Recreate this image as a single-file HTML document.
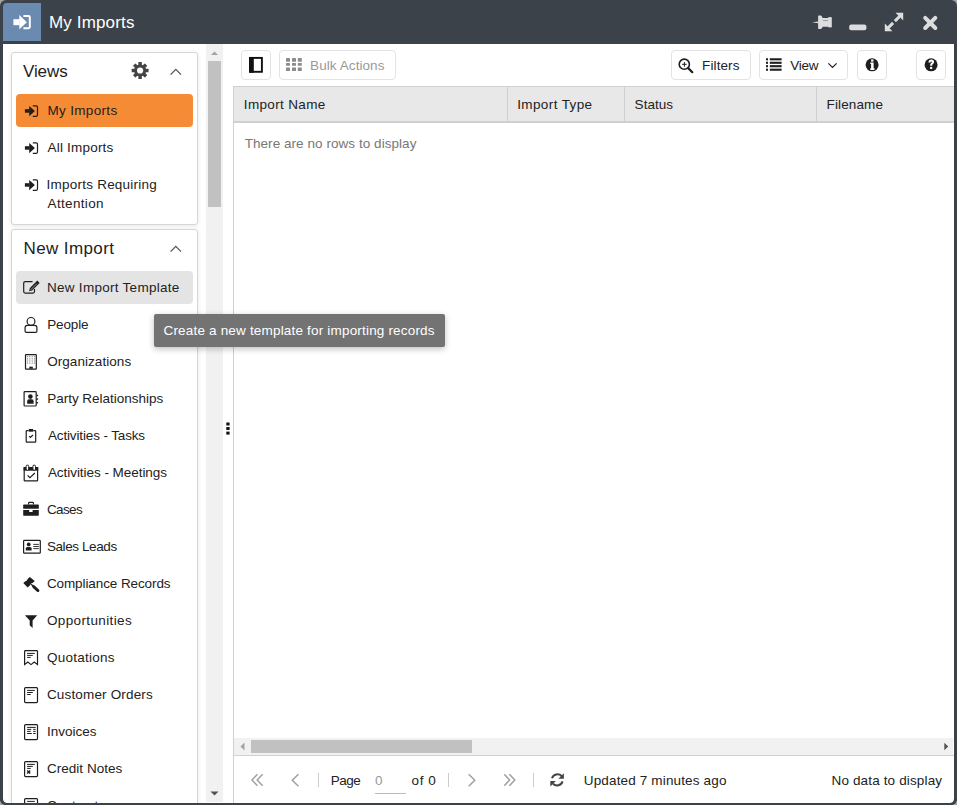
<!DOCTYPE html>
<html><head><meta charset="utf-8"><style>
html,body{margin:0;padding:0;width:957px;height:805px;overflow:hidden;background:#a3a5a7;}
*{box-sizing:border-box;}
.t{position:absolute;white-space:nowrap;font-family:"Liberation Sans",sans-serif;}
.abs{position:absolute;}
#frame{position:absolute;left:0;top:0;width:957px;height:805px;background:#3c4249;border-radius:6px;}
#content{position:absolute;left:3px;top:44px;width:951px;height:759px;background:#fff;border-radius:0 0 4px 4px;overflow:hidden;}
#appicon{position:absolute;left:3px;top:3px;width:38px;height:38px;background:#6a8aaf;border-radius:4px 0 0 0;}
.panel{position:absolute;background:#fff;border:1px solid #d6d6d6;border-radius:3px;box-shadow:0 1px 4px rgba(0,0,0,0.10);}
.btn{position:absolute;top:50px;height:30px;border:1px solid #e3e3e3;border-radius:4px;background:#fff;}
</style></head><body>
<div id="frame"></div>
<div id="appicon"></div>
<div class="t" style="left:49.00px;top:11.61px;font-size:17px;line-height:21px;color:#fff;letter-spacing:0.15px;">My Imports</div>
<div id="content"></div>
<div class="panel" style="left:11px;top:52px;width:187px;height:173px;"></div>
<div class="panel" style="left:11px;top:229px;width:187px;height:600px;"></div>
<div class="abs" style="left:16px;top:94px;width:177px;height:33px;background:#f58b35;border-radius:4px;"></div>
<div class="abs" style="left:16px;top:271px;width:177px;height:33px;background:#e4e4e4;border-radius:4px;"></div>
<div class="abs" style="left:206px;top:44px;width:17px;height:758px;background:#f1f1f1;"></div>
<div class="abs" style="left:208px;top:61px;width:13px;height:146px;background:#c1c1c1;"></div>
<div class="abs" style="left:233px;top:86px;width:721px;height:717px;border-left:1px solid #cfcfcf;"></div>
<div class="abs" style="left:233px;top:86px;width:721px;height:37px;background:#e8e8e8;border-top:1px solid #d0d0d0;border-bottom:2px solid #d0d0d0;border-left:1px solid #cfcfcf;"></div>
<div class="abs" style="left:507px;top:87px;width:1px;height:34px;background:#d0d0d0;"></div>
<div class="abs" style="left:624px;top:87px;width:1px;height:34px;background:#d0d0d0;"></div>
<div class="abs" style="left:816px;top:87px;width:1px;height:34px;background:#d0d0d0;"></div>
<div class="abs" style="left:234px;top:738px;width:719px;height:17px;background:#f1f1f1;"></div>
<div class="abs" style="left:251px;top:740px;width:221px;height:13px;background:#c1c1c1;"></div>
<div class="abs" style="left:234px;top:755px;width:720px;height:1px;background:#d0d0d0;"></div>
<div class="btn" style="left:241px;width:30px;"></div>
<div class="btn" style="left:279px;width:117px;"></div>
<div class="btn" style="left:671px;width:80px;"></div>
<div class="btn" style="left:759px;width:89px;"></div>
<div class="btn" style="left:857px;width:30px;"></div>
<div class="btn" style="left:916px;width:30px;"></div>
<div class="t" style="left:23.00px;top:60.61px;font-size:17px;line-height:21px;color:#222;letter-spacing:-0.1px;">Views</div>
<div class="t" style="left:23.50px;top:237.61px;font-size:17px;line-height:21px;color:#222;letter-spacing:0.4px;">New Import</div>
<div class="t" style="left:47.40px;top:101.82px;font-size:13.5px;line-height:17px;color:#222;letter-spacing:0.333px;">My Imports</div>
<div class="t" style="left:47.60px;top:138.82px;font-size:13.5px;line-height:17px;color:#222;letter-spacing:0.19px;">All Imports</div>
<div class="t" style="left:46.60px;top:175.82px;font-size:13.5px;line-height:17px;color:#222;letter-spacing:0.225px;">Imports Requiring</div>
<div class="t" style="left:47.60px;top:194.82px;font-size:13.5px;line-height:17px;color:#222;letter-spacing:0.325px;">Attention</div>
<div class="t" style="left:47.00px;top:278.82px;font-size:13.5px;line-height:17px;color:#222;letter-spacing:0.278px;">New Import Template</div>
<div class="t" style="left:47.20px;top:315.82px;font-size:13.5px;line-height:17px;color:#222;letter-spacing:-0.14px;">People</div>
<div class="t" style="left:47.20px;top:352.82px;font-size:13.5px;line-height:17px;color:#222;letter-spacing:0.058px;">Organizations</div>
<div class="t" style="left:47.20px;top:389.82px;font-size:13.5px;line-height:17px;color:#222;letter-spacing:-0.017px;">Party Relationships</div>
<div class="t" style="left:47.90px;top:426.82px;font-size:13.5px;line-height:17px;color:#222;letter-spacing:-0.135px;">Activities - Tasks</div>
<div class="t" style="left:47.90px;top:463.82px;font-size:13.5px;line-height:17px;color:#222;letter-spacing:-0.045px;">Activities - Meetings</div>
<div class="t" style="left:46.90px;top:500.82px;font-size:13.5px;line-height:17px;color:#222;letter-spacing:-0.625px;">Cases</div>
<div class="t" style="left:46.90px;top:537.82px;font-size:13.5px;line-height:17px;color:#222;letter-spacing:-0.4px;">Sales Leads</div>
<div class="t" style="left:46.90px;top:574.82px;font-size:13.5px;line-height:17px;color:#222;letter-spacing:-0.094px;">Compliance Records</div>
<div class="t" style="left:46.90px;top:611.82px;font-size:13.5px;line-height:17px;color:#222;letter-spacing:0.375px;">Opportunities</div>
<div class="t" style="left:46.90px;top:648.82px;font-size:13.5px;line-height:17px;color:#222;letter-spacing:0.267px;">Quotations</div>
<div class="t" style="left:46.90px;top:685.82px;font-size:13.5px;line-height:17px;color:#222;letter-spacing:0.164px;">Customer Orders</div>
<div class="t" style="left:46.90px;top:722.82px;font-size:13.5px;line-height:17px;color:#222;letter-spacing:0.014px;">Invoices</div>
<div class="t" style="left:46.90px;top:759.82px;font-size:13.5px;line-height:17px;color:#222;letter-spacing:0.036px;">Credit Notes</div>
<div class="t" style="left:47.00px;top:796.82px;font-size:13.5px;line-height:17px;color:#222;letter-spacing:0.05px;">Contracts</div>
<div class="t" style="left:243.80px;top:95.82px;font-size:13.5px;line-height:17px;color:#222;letter-spacing:0.35px;">Import Name</div>
<div class="t" style="left:517.20px;top:95.82px;font-size:13.5px;line-height:17px;color:#222;letter-spacing:0.39px;">Import Type</div>
<div class="t" style="left:634.60px;top:95.82px;font-size:13.5px;line-height:17px;color:#222;letter-spacing:0.04px;">Status</div>
<div class="t" style="left:826.50px;top:95.82px;font-size:13.5px;line-height:17px;color:#222;letter-spacing:0.129px;">Filename</div>
<div class="t" style="left:244.70px;top:134.82px;font-size:13.5px;line-height:17px;color:#777;letter-spacing:0.052px;">There are no rows to display</div>
<div class="t" style="left:310.10px;top:56.82px;font-size:13.5px;line-height:17px;color:#999;letter-spacing:0.073px;">Bulk Actions</div>
<div class="t" style="left:702.10px;top:56.82px;font-size:13.5px;line-height:17px;color:#222;letter-spacing:0.1px;">Filters</div>
<div class="t" style="left:790.30px;top:56.82px;font-size:13.5px;line-height:17px;color:#222;letter-spacing:-0.267px;">View</div>
<div class="t" style="left:330.80px;top:771.82px;font-size:13.5px;line-height:17px;color:#222;letter-spacing:-0.5px;">Page</div>
<div class="t" style="left:375.00px;top:771.82px;font-size:13.5px;line-height:17px;color:#999;letter-spacing:0.05px;">0</div>
<div class="abs" style="left:375px;top:793px;width:31px;height:1px;background:#bbb;"></div>
<div class="t" style="left:411.60px;top:771.82px;font-size:13.5px;line-height:17px;color:#222;letter-spacing:0.533px;">of 0</div>
<div class="t" style="left:583.80px;top:771.82px;font-size:13.5px;line-height:17px;color:#222;letter-spacing:0.15px;">Updated 7 minutes ago</div>
<div class="t" style="left:831.50px;top:771.82px;font-size:13.5px;line-height:17px;color:#222;letter-spacing:0.147px;">No data to display</div>
<div class="abs" style="left:318px;top:773px;width:1px;height:14px;background:#ccc;"></div>
<div class="abs" style="left:448px;top:773px;width:1px;height:14px;background:#ccc;"></div>
<div class="abs" style="left:533px;top:773px;width:1px;height:14px;background:#ccc;"></div>
<svg class="abs" style="left:0;top:0" width="957" height="805" viewBox="0 0 957 805">
<g transform="translate(0,0)" fill="#1e1e1e"><rect x="24.9" y="109.2" width="4.6" height="3.5"/><path d="M29.2 106 L34.9 111.1 L29.2 116.3 Z"/><path d="M32.8 105.9 H36.3 Q37.5 105.9 37.5 107.1 V115.1 Q37.5 116.3 36.3 116.3 H32.8" fill="none" stroke="#1e1e1e" stroke-width="1.2"/></g><g transform="translate(0,37)" fill="#1e1e1e"><rect x="24.9" y="109.2" width="4.6" height="3.5"/><path d="M29.2 106 L34.9 111.1 L29.2 116.3 Z"/><path d="M32.8 105.9 H36.3 Q37.5 105.9 37.5 107.1 V115.1 Q37.5 116.3 36.3 116.3 H32.8" fill="none" stroke="#1e1e1e" stroke-width="1.2"/></g><g transform="translate(0,74)" fill="#1e1e1e"><rect x="24.9" y="109.2" width="4.6" height="3.5"/><path d="M29.2 106 L34.9 111.1 L29.2 116.3 Z"/><path d="M32.8 105.9 H36.3 Q37.5 105.9 37.5 107.1 V115.1 Q37.5 116.3 36.3 116.3 H32.8" fill="none" stroke="#1e1e1e" stroke-width="1.2"/></g><g fill="#fff"><rect x="13.4" y="19.2" width="6.2" height="6"/><path d="M19.3 15.1 L26.9 22.2 L19.3 29.2 Z"/><path d="M23.4 16 H28.6 Q29.8 16 29.8 17.2 V27.1 Q29.8 28.2 28.6 28.2 H23.4" fill="none" stroke="#fff" stroke-width="2"/></g><g fill="#dcdddf"><path d="M812 22.3 L818.3 21.4 L818.3 23.2 Z"/><path d="M818.1 16.2 Q818.1 15.5 818.8 15.5 L821 15.5 Q822.5 16.5 822.5 18.1 L828 18.1 Q828.5 17 829.5 17 L831.8 17.3 L831.8 27.2 L829.5 27.5 Q828.5 27.5 828 26.8 L822.5 26.8 Q822.5 28.3 821 28.9 L818.8 28.9 Q818.1 28.9 818.1 28.2 Z"/></g><line x1="823" y1="20.5" x2="828" y2="20.5" stroke="#8a8c8f" stroke-width="0.8"/><rect x="849.2" y="24.6" width="17.2" height="5.7" rx="2" fill="#dcdddf"/><g fill="#dcdddf"><path d="M895.5 12.8 L903.2 12.8 L903.2 20.5 Z"/><path d="M884.8 23.5 L884.8 31.2 L892.5 31.2 Z"/></g><g stroke="#dcdddf" stroke-width="3"><line x1="894.9" y1="21.1" x2="900" y2="16"/><line x1="893.1" y1="22.9" x2="888" y2="28"/></g><g stroke="#dcdddf" stroke-width="4" stroke-linecap="round"><line x1="925.2" y1="17.9" x2="935.3" y2="28"/><line x1="935.3" y1="17.9" x2="925.2" y2="28"/></g><g fill="#444"><rect x="138.35" y="62.1" width="3.5" height="4" rx="0.5" transform="rotate(0 140.1 70.5)"/><rect x="138.35" y="62.1" width="3.5" height="4" rx="0.5" transform="rotate(45 140.1 70.5)"/><rect x="138.35" y="62.1" width="3.5" height="4" rx="0.5" transform="rotate(90 140.1 70.5)"/><rect x="138.35" y="62.1" width="3.5" height="4" rx="0.5" transform="rotate(135 140.1 70.5)"/><rect x="138.35" y="62.1" width="3.5" height="4" rx="0.5" transform="rotate(180 140.1 70.5)"/><rect x="138.35" y="62.1" width="3.5" height="4" rx="0.5" transform="rotate(225 140.1 70.5)"/><rect x="138.35" y="62.1" width="3.5" height="4" rx="0.5" transform="rotate(270 140.1 70.5)"/><rect x="138.35" y="62.1" width="3.5" height="4" rx="0.5" transform="rotate(315 140.1 70.5)"/><circle cx="140.1" cy="70.5" r="6"/></g><circle cx="140.1" cy="70.5" r="3.1" fill="#fff"/><g fill="none" stroke="#555" stroke-width="1.3"><path d="M170.6 74.6 L175.8 69.4 L181 74.6"/><path d="M170.6 251.6 L175.8 246.4 L181 251.6"/></g><g fill="none" stroke="#1e1e1e" stroke-width="1.2"><path d="M32.6 281.6 H25.2 Q23.7 281.6 23.7 283.1 V291.6 Q23.7 293.1 25.2 293.1 H33 Q34.5 293.1 34.5 291.6 V289"/></g><path d="M37.3 280.6 L39.6 282.9 L32.1 290.4 L29.1 291.3 L29.9 288.1 Z" fill="#1e1e1e"/><line x1="30.6" y1="289.9" x2="36.8" y2="283.7" stroke="#e4e4e4" stroke-width="0.6"/><g fill="none" stroke="#1e1e1e" stroke-width="1.2"><circle cx="31" cy="321.4" r="3.9"/><path d="M27.4 325.3 H34.6 Q36.9 325.3 36.9 327.6 V331.2 Q36.9 332.4 35.7 332.4 H26.3 Q25.1 332.4 25.1 331.2 V327.6 Q25.1 325.3 27.4 325.3 Z"/></g><g><rect x="25.5" y="354.7" width="10.8" height="14.4" rx="0.6" fill="none" stroke="#1e1e1e" stroke-width="1.2"/><g fill="#666"><rect x="27.1" y="356.2" width="1" height="1"/><rect x="29.3" y="356.2" width="1" height="1"/><rect x="31.700000000000003" y="356.2" width="1" height="1"/><rect x="33.9" y="356.2" width="1" height="1"/><rect x="27.1" y="358.4" width="1" height="1"/><rect x="29.3" y="358.4" width="1" height="1"/><rect x="31.700000000000003" y="358.4" width="1" height="1"/><rect x="33.9" y="358.4" width="1" height="1"/><rect x="27.1" y="360.5" width="1" height="1"/><rect x="29.3" y="360.5" width="1" height="1"/><rect x="31.700000000000003" y="360.5" width="1" height="1"/><rect x="33.9" y="360.5" width="1" height="1"/><rect x="27.1" y="362.6" width="1" height="1"/><rect x="29.3" y="362.6" width="1" height="1"/><rect x="31.700000000000003" y="362.6" width="1" height="1"/><rect x="33.9" y="362.6" width="1" height="1"/></g><rect x="29.3" y="366.7" width="3.5" height="2" fill="#1e1e1e"/></g><g><rect x="24.1" y="391.6" width="12.1" height="14.4" rx="0.8" fill="none" stroke="#1e1e1e" stroke-width="1.2"/><circle cx="30.4" cy="396.6" r="2.3" fill="#1e1e1e"/><path d="M27.2 403.8 V401.2 Q27.2 399.3 29 399.3 H31.8 Q33.6 399.3 33.6 401.2 V403.8 Z" fill="#1e1e1e"/><g fill="#1e1e1e"><rect x="36.5" y="394.8" width="1.6" height="1.4"/><rect x="36.5" y="398.4" width="1.6" height="1.4"/><rect x="36.5" y="402" width="1.6" height="1.4"/></g></g><g fill="none" stroke="#1e1e1e" stroke-width="1.2"><path d="M28.6 430.6 H26.9 Q26.2 430.6 26.2 431.3 V441.4 Q26.2 442.1 26.9 442.1 H35 Q35.7 442.1 35.7 441.4 V431.3 Q35.7 430.6 35 430.6 H33.3"/><path d="M29.2 436.2 L30.4 437.5 L32.9 435"/></g><path d="M28.8 429 H33.1 V431.7 H28.8 Z" fill="#1e1e1e"/><g><path d="M24.2 467.6 H37.6 V480.3 Q37.6 480.9 37 480.9 H24.8 Q24.2 480.9 24.2 480.3 Z" fill="none" stroke="#1e1e1e" stroke-width="1.2"/><rect x="23.6" y="467.3" width="14.6" height="3.4" fill="#1e1e1e"/><rect x="26.1" y="465.1" width="2.6" height="5.2" rx="1.2" fill="#fff" stroke="#1e1e1e" stroke-width="1"/><rect x="32.9" y="465.1" width="2.6" height="5.2" rx="1.2" fill="#fff" stroke="#1e1e1e" stroke-width="1"/><path d="M27.6 475.3 L29.9 477.7 L34.9 473" fill="none" stroke="#1e1e1e" stroke-width="1.2"/></g><g fill="#1e1e1e"><path d="M23.2 505.2 Q23.2 504.6 23.8 504.6 H38.2 Q38.8 504.6 38.8 505.2 V508.8 H23.2 Z"/><path d="M23.2 510 H29.2 V511.9 H32.6 V510 H38.8 V515.1 Q38.8 515.7 38.2 515.7 H23.8 Q23.2 515.7 23.2 515.1 Z"/></g><path d="M28.6 504.6 V503 Q28.6 502.4 29.2 502.4 H32.8 Q33.4 502.4 33.4 503 V504.6" fill="none" stroke="#1e1e1e" stroke-width="1.1"/><g><rect x="23.6" y="540.4" width="16.7" height="12.8" rx="0.8" fill="none" stroke="#1e1e1e" stroke-width="1.2"/><circle cx="28.7" cy="544.4" r="1.9" fill="#1e1e1e"/><path d="M25.8 550.6 V548.5 Q25.8 546.9 27.3 546.9 H30.1 Q31.6 546.9 31.6 548.5 V550.6 Z" fill="#1e1e1e"/><g stroke="#1e1e1e" stroke-width="0.9"><line x1="33.3" y1="544.4" x2="38.9" y2="544.4"/><line x1="33.3" y1="546.5" x2="38.9" y2="546.5"/><line x1="33.3" y1="548.6" x2="38.9" y2="548.6"/></g></g><path d="M23.3 583.1 L25.4 581.2 Q26.9 581 27.2 580.1 Q27.6 579.2 27.6 579.1 L29.8 577.1 L34.75 581 L32.6 583 Q31.3 583.1 30.9 584.1 Q30.6 585 29.8 585.5 L27.65 587.5 Z" fill="#1e1e1e"/><path d="M31.2 584.2 L33.2 586.2" stroke="#1e1e1e" stroke-width="1.3"/><path d="M33.6 586.6 L38 590.6" stroke="#1e1e1e" stroke-width="2.8" stroke-linecap="round"/><path d="M24.9 615.2 H37.2 L32.6 620.4 V627.9 L29.7 625.3 V620.4 Z" fill="#1e1e1e"/><g fill="none" stroke="#1e1e1e" stroke-width="1.2"><path d="M24.6 664.6 V651.4 Q24.6 650.6 25.4 650.6 H36.7 Q37.5 650.6 37.5 651.4 V664.6 L34.3 662 L31 664.6 L27.8 662 Z"/></g><g stroke="#1e1e1e" stroke-width="1"><line x1="27.1" y1="653.4" x2="34.8" y2="653.4"/><line x1="27.1" y1="655.4" x2="32.8" y2="655.4"/><line x1="27.1" y1="657.4" x2="30.7" y2="657.4"/></g><rect x="24.6" y="687.6" width="12.9" height="15" rx="1" fill="none" stroke="#1e1e1e" stroke-width="1.2"/><g stroke="#1e1e1e" stroke-width="1"><line x1="27.1" y1="690.4" x2="34.8" y2="690.4"/><line x1="27.1" y1="692.5" x2="32.8" y2="692.5"/><line x1="27.1" y1="694.5" x2="30.7" y2="694.5"/></g><rect x="24.6" y="724.6" width="12.9" height="15" rx="1" fill="none" stroke="#1e1e1e" stroke-width="1.2"/><g stroke="#1e1e1e" stroke-width="1"><line x1="27.1" y1="727.4" x2="35.7" y2="727.4"/><line x1="27.1" y1="729.4" x2="31.2" y2="729.4"/><line x1="33.2" y1="729.4" x2="35.6" y2="729.4"/><line x1="27.1" y1="731.4" x2="30.6" y2="731.4"/><line x1="33.2" y1="731.4" x2="35.6" y2="731.4"/><line x1="27.1" y1="733.5" x2="31.8" y2="733.5"/><line x1="33.2" y1="733.5" x2="35.6" y2="733.5"/></g><rect x="24.6" y="761.6" width="12.9" height="15" rx="1" fill="none" stroke="#1e1e1e" stroke-width="1.2"/><g stroke="#1e1e1e" stroke-width="1"><line x1="27.1" y1="764.4" x2="34.8" y2="764.4"/><line x1="27.1" y1="766.4" x2="32.8" y2="766.4"/><line x1="27.1" y1="768.4" x2="30.7" y2="768.4"/><line x1="27.2" y1="770.5" x2="30.2" y2="773.5" stroke-width="1.4"/><line x1="30.2" y1="770.5" x2="27.2" y2="773.5" stroke-width="1.4"/></g><rect x="24.6" y="798.6" width="12.9" height="15" rx="1" fill="none" stroke="#1e1e1e" stroke-width="1.2"/><line x1="27.1" y1="801.4" x2="34.8" y2="801.4" stroke="#1e1e1e" stroke-width="1"/><g><rect x="250" y="57.9" width="11.9" height="13.9" fill="none" stroke="#111" stroke-width="1.9"/><rect x="249.2" y="57" width="4.6" height="15.7" fill="#111"/></g><g fill="#8c8c8c"><rect x="286" y="57.9" width="4" height="3.9" rx="0.5"/><rect x="292" y="57.9" width="4" height="3.9" rx="0.5"/><rect x="297.8" y="57.9" width="4" height="3.9" rx="0.5"/><rect x="286" y="63" width="4" height="2.8" rx="0.5"/><rect x="292" y="63" width="4" height="2.8" rx="0.5"/><rect x="297.8" y="63" width="4" height="2.8" rx="0.5"/><rect x="286" y="67.5" width="4" height="3.4" rx="0.5"/><rect x="292" y="67.5" width="4" height="3.4" rx="0.5"/><rect x="297.8" y="67.5" width="4" height="3.4" rx="0.5"/></g><g fill="none" stroke="#1e1e1e"><circle cx="684.3" cy="64.2" r="5.1" stroke-width="1.6"/><line x1="682" y1="64.3" x2="686.7" y2="64.3" stroke-width="1"/><line x1="684.4" y1="62" x2="684.4" y2="66.8" stroke-width="1"/><line x1="688.2" y1="68.1" x2="692.3" y2="72.2" stroke-width="2.2" stroke-linecap="round"/></g><g fill="#1e1e1e"><rect x="766" y="58.25" width="2" height="2.1"/><rect x="769.8" y="58.25" width="11.8" height="2.1"/><rect x="766" y="61.75" width="2" height="2.1"/><rect x="769.8" y="61.75" width="11.8" height="2.1"/><rect x="766" y="65.15" width="2" height="2.1"/><rect x="769.8" y="65.15" width="11.8" height="2.1"/><rect x="766" y="68.65" width="2" height="2.1"/><rect x="769.8" y="68.65" width="11.8" height="2.1"/></g><path d="M828.4 63.4 L832.5 67.5 L836.6 63.4" fill="none" stroke="#1e1e1e" stroke-width="1.2"/><circle cx="872.1" cy="64.8" r="6.5" fill="#1e1e1e"/><g fill="#fff"><rect x="871.1" y="59.4" width="2.4" height="2.2"/><path d="M870.3 62.6 H873.6 V68.3 H874.5 V70 H870.3 V68.3 H871.1 V64 H870.3 Z"/></g><circle cx="931.1" cy="64.8" r="6.5" fill="#1e1e1e"/><path d="M928.4 62.4 Q928.6 59.4 931.3 59.4 Q934.1 59.4 934.1 62 Q934.1 63.6 932.6 64.3 Q932.2 64.6 932.2 65.8 H930.1 Q930 63.8 931.2 63 Q932 62.5 932 62 Q932 61.4 931.3 61.4 Q930.6 61.4 930.4 62.4 Z" fill="#fff"/><rect x="930.1" y="66.9" width="2.1" height="2.1" fill="#fff"/><g fill="#111"><rect x="226.3" y="422.5" width="3.3" height="3"/><rect x="226.3" y="427" width="3.3" height="3"/><rect x="226.3" y="431.6" width="3.3" height="3"/></g><path d="M211 55 L214.5 51.5 L218 55 Z" fill="#a3a3a3"/><path d="M210.5 791.5 L214.5 795.5 L218.5 791.5 Z" fill="#505050"/><path d="M244.5 742.5 L240.5 746.5 L244.5 750.5 Z" fill="#a3a3a3"/><path d="M944.3 742.8 L948.2 746.5 L944.3 750.2 Z" fill="#505050"/><g fill="none" stroke="#a0a0a0" stroke-width="1.5"><path d="M257.4 774.3 L252 780 L257.4 785.7"/><path d="M262.6 774.3 L257.2 780 L262.6 785.7"/><path d="M298.4 774.3 L292.3 780.3 L298.4 786.3"/><path d="M468.7 774.3 L474.8 780.3 L468.7 786.3"/><path d="M504.2 774.3 L509.6 780 L504.2 785.7"/><path d="M509.4 774.3 L514.8 780 L509.4 785.7"/></g><g fill="none" stroke="#444" stroke-width="2"><path d="M552 778.3 A5.8 5.8 0 0 1 561.6 776"/><path d="M562.6 781.4 A5.8 5.8 0 0 1 553 783.7"/></g><path d="M563.9 773.3 V778.8 H558.4 Z" fill="#444"/><path d="M550.3 786.6 V781.1 H555.8 Z" fill="#444"/></svg>
<svg class="abs" style="left:0;top:0" width="957" height="805" viewBox="0 0 957 805"><path fill-rule="evenodd" fill="#3c4249" d="M0 40 V799 A6 6 0 0 0 6 805 H951 A6 6 0 0 0 957 799 V40 Z M3 40 H954 V799 A4 4 0 0 1 950 803 H7 A4 4 0 0 1 3 799 Z"/></svg>
<div class="abs" style="left:154px;top:314px;width:291px;height:33px;background:#737373;border-radius:2px;box-shadow:0 2px 6px rgba(0,0,0,0.25);"></div>
<div class="t" style="left:163.50px;top:321.82px;font-size:13.5px;line-height:17px;color:#fff;letter-spacing:0.183px;">Create a new template for importing records</div>
</body></html>
